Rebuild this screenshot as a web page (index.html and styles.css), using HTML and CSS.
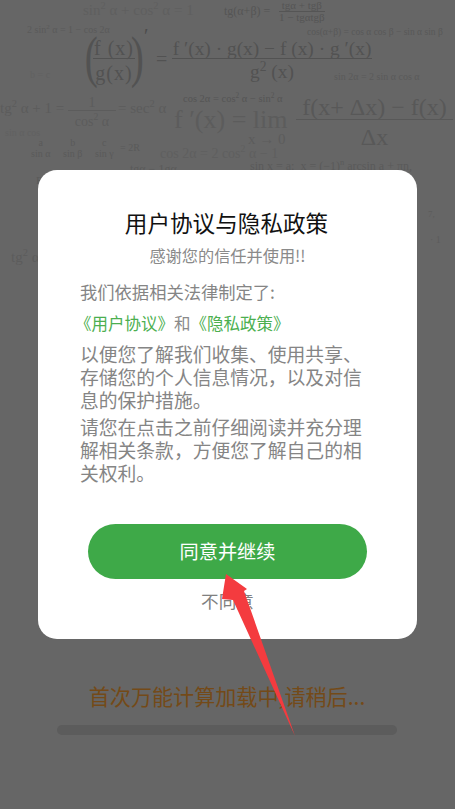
FILE: index.html
```html
<!DOCTYPE html>
<html lang="zh">
<head>
<meta charset="utf-8">
<title>用户协议与隐私政策</title>
<link rel="stylesheet" href="styles.css">
</head>
<body>
<main class="screen">
  <div class="formulas">
    <span class="f f1">sin<sup>2</sup> α + cos<sup>2</sup> α = 1</span>
    <span class="f f2">tg(α+β) =</span>
    <span class="f f3 frac"><span class="num">tgα + tgβ</span><span>1 − tgαtgβ</span></span>
    <span class="f f4">2 sin<sup>2</sup> α = 1 − cos 2α</span>
    <span class="f f5">cos(α+β) = cos α cos β − sin α sin β</span>
    <span class="f f6 paren">(</span>
    <span class="f f7 frac"><span class="num">f (x)</span><span>g(x)</span></span>
    <span class="f f8 paren">)</span>
    <span class="f f9">′</span>
    <span class="f f10">=</span>
    <span class="f f11 frac"><span class="num">f ′(x) · g(x) − f (x) · g ′(x)</span><span>g<sup>2</sup> (x)</span></span>
    <span class="f f12">sin 2α = 2 sin α cos α</span>
    <span class="f f13">tg<sup>2</sup> α + 1 =</span>
    <span class="f f14 frac"><span class="num">1</span><span>cos<sup>2</sup> α</span></span>
    <span class="f f15">= sec<sup>2</sup> α</span>
    <span class="f f16">cos 2α = cos<sup>2</sup> α − sin<sup>2</sup> α</span>
    <span class="f f17">f ′(x) = lim</span>
    <span class="f f18">x → 0</span>
    <span class="f f19 frac"><span class="num">f(x+ Δx) − f(x)</span><span>Δx</span></span>
    <span class="f f20 frac"><span>a</span><span>sin α</span></span>
    <span class="f f21 frac"><span>b</span><span>sin β</span></span>
    <span class="f f22 frac"><span>c</span><span>sin γ</span></span>
    <span class="f f23">= 2R</span>
    <span class="f f24">cos 2α = 2 cos<sup>2</sup> α − 1</span>
    <span class="f f25">sin x = a;&nbsp; x = (−1)<sup>n</sup> arcsin a + πn,</span>
    <span class="f f26">tgα − 1gα</span>
    <span class="f f27">F</span>
    <span class="f f28">tg<sup>2</sup> α</span>
    <span class="f f29">b = c</span>
    <span class="f f30">sin α cos</span>
    <span class="f f31">7,</span>
    <span class="f f32">· 1</span>
  </div>

  <section class="dialog">
    <h1 class="title">用户协议与隐私政策</h1>
    <p class="thanks">感谢您的信任并使用!!</p>
    <p class="intro">我们依据相关法律制定了: </p>
    <p class="links"><a class="link">《用户协议》</a>和<a class="link">《隐私政策》</a></p>
    <p class="body-text">以便您了解我们收集、使用共享、存储您的个人信息情况，以及对信息的保护措施。</p>
    <p class="body-text">请您在点击之前仔细阅读并充分理解相关条款，方便您了解自己的相关权利。</p>
    <button class="agree">同意并继续</button>
    <button class="decline">不同意</button>
  </section>

  <p class="loading">首次万能计算加载中,请稍后...</p>
  <div class="progress"></div>

  <svg class="arrow" viewBox="0 0 455 809" aria-hidden="true">
    <path d="M226 574 L247 589 L244 591 L295 736 L233 600 L222 599 Z"/>
  </svg>
</main>
</body>
</html>
```

FILE: styles.css
```css
* { box-sizing: border-box; }
html, body { margin: 0; padding: 0; }
body { background: #666; font-family: "Noto Sans CJK SC", "Noto Sans", sans-serif; }

.screen {
  position: relative;
  width: 455px;
  height: 809px;
  overflow: hidden;
  background: #666;
  display: flex;
  flex-direction: column;
  align-items: center;
  padding-top: 170px;
}

.formulas { position: absolute; inset: 0; }
.f {
  position: absolute;
  font-family: "Liberation Serif", serif;
  color: #565656;
  white-space: nowrap;
  line-height: 1;
}
.f sup { font-size: 70%; line-height: 0; }
.frac { display: inline-flex; flex-direction: column; align-items: center; }
.frac .num { border-bottom: 1px solid currentColor; align-self: stretch; text-align: center; }

.f1 { left: 83px; top: 3px; font-size: 15px; color: #5f5f5f; }
.f2 { left: 224px; top: 5px; font-size: 12px; color: #555; }
.f3 { left: 279px; top: 0; font-size: 11px; color: #555; }
.f4 { left: 27px; top: 25px; font-size: 10px; color: #5a5a5a; }
.f5 { left: 307px; top: 28px; font-size: 9.5px; color: #585858; }
.f6 { left: 82px; top: 29px; font-size: 56px; transform: scaleX(.7); color: #525252; }
.f7 { left: 93px; top: 38px; width: 42px; font-size: 20px; letter-spacing: 1px; gap: 4px; color: #525252; }
.f8 { left: 128px; top: 29px; font-size: 56px; transform: scaleX(.7); color: #525252; }
.f9 { left: 144px; top: 26px; font-size: 20px; color: #4c4c4c; }
.f10 { left: 156px; top: 49px; font-size: 20px; color: #525252; }
.f11 { left: 172px; top: 39px; width: 200px; font-size: 19.4px; gap: 3px; color: #525252; }
.f12 { left: 334px; top: 72px; font-size: 10px; color: #5a5a5a; }
.f13 { left: 0; top: 101px; font-size: 15px; color: #5c5c5c; }
.f14 { left: 68px; top: 96px; width: 48px; font-size: 14px; gap: 4px; color: #5c5c5c; }
.f15 { left: 118px; top: 101px; font-size: 15px; color: #5c5c5c; }
.f16 { left: 183px; top: 94px; font-size: 10.5px; color: #555; }
.f17 { left: 174px; top: 107px; font-size: 26px; color: #5c5c5c; }
.f18 { left: 248px; top: 132px; font-size: 15px; color: #5c5c5c; }
.f19 { left: 296px; top: 95px; width: 157px; font-size: 24px; gap: 5px; color: #585858; }
.f20, .f21, .f22 { top: 138px; font-size: 10px; gap: 1px; color: #5a5a5a; }
.f20 { left: 31px; }
.f21 { left: 63px; }
.f22 { left: 95px; }
.f23 { left: 120px; top: 143px; font-size: 10px; color: #5a5a5a; }
.f24 { left: 160px; top: 147px; font-size: 14px; color: #5f5f5f; }
.f25 { left: 250px; top: 160px; font-size: 12px; color: #5a5a5a; }
.f26 { left: 130px; top: 163px; font-size: 12px; color: #5a5a5a; }
.f27 { left: 36px; top: 175px; font-size: 11px; color: #5a5a5a; }
.f28 { left: 11px; top: 250px; font-size: 15px; color: #5c5c5c; }
.f29 { left: 30px; top: 70px; font-size: 10px; color: #616161; }
.f30 { left: 5px; top: 128px; font-size: 10px; color: #616161; }
.f31 { left: 428px; top: 210px; font-size: 9px; color: #5c5c5c; }
.f32 { left: 430px; top: 235px; font-size: 10px; color: #5c5c5c; }

.dialog {
  position: relative;
  width: 379px;
  height: 469px;
  background: #fff;
  border-radius: 19px;
  display: flex;
  flex-direction: column;
  align-items: stretch;
  padding: 39px 42px 0;
  z-index: 1;
}
.title {
  margin: 0;
  font-size: 22.6px;
  font-weight: 400;
  line-height: 28px;
  color: #111;
  text-align: center;
  transform: translateX(-1px);
}
.thanks {
  margin: 7px 0 0;
  font-size: 16.2px;
  line-height: 22px;
  color: #8a8a8a;
  text-align: center;
}
.intro {
  margin: 14px 0 0;
  font-size: 17.3px;
  line-height: 24px;
  color: #858585;
}
.links {
  margin: 7px 0 0 -5px;
  font-size: 16.5px;
  line-height: 24px;
  color: #8a8a8a;
}
.link { color: #4caf50; }
.body-text {
  margin: 0;
  font-size: 18.8px;
  line-height: 23px;
  color: #858585;
  width: 292px;
}
.links + .body-text { margin-top: 7px; }
.body-text + .body-text { margin-top: 4px; }

.agree {
  position: absolute;
  left: 50px;
  top: 354px;
  width: 279px;
  height: 55px;
  padding-bottom: 2px;
  border: 0;
  border-radius: 28px;
  background: #3ea948;
  color: #fff;
  font: 400 19.2px "Noto Sans CJK SC", sans-serif;
}
.decline {
  position: absolute;
  left: 0;
  right: 0;
  top: 418px;
  padding: 0;
  border: 0;
  background: none;
  color: #808080;
  font: 400 17.6px/26px "Noto Sans CJK SC", sans-serif;
  text-align: center;
}

.loading {
  margin: 42px 0 0 -1px;
  font-size: 21.1px;
  line-height: 30px;
  color: #744a18;
}
.progress {
  width: 340px;
  height: 10px;
  margin-top: 14px;
  margin-left: -1px;
  border-radius: 5px;
  background: #5c5c5c;
}

.arrow {
  position: absolute;
  inset: 0;
  width: 455px;
  height: 809px;
  z-index: 2;
  pointer-events: none;
}
.arrow path { fill: #f43b3f; }
```
